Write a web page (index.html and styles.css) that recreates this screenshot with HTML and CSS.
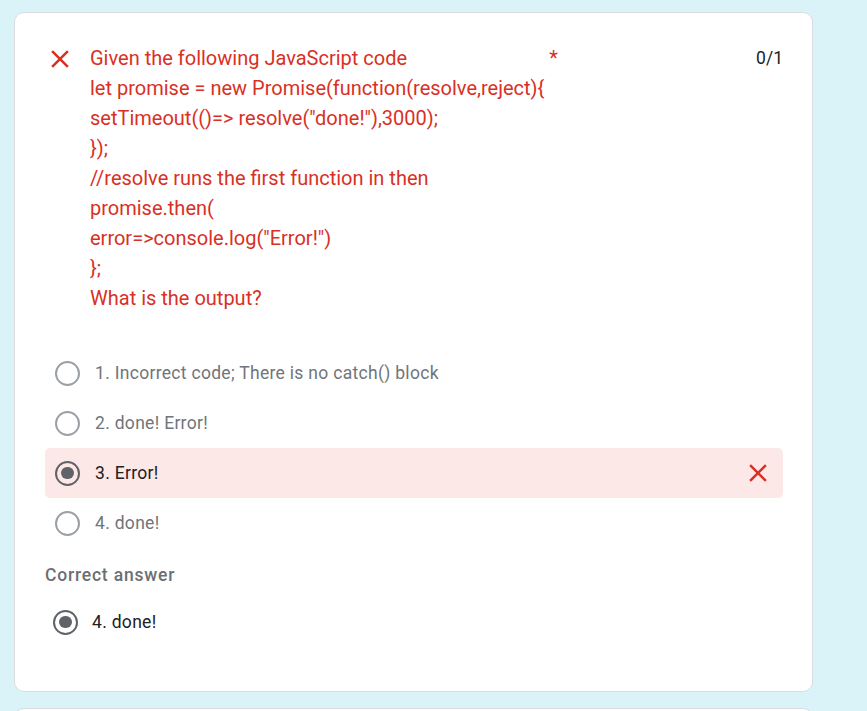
FILE: index.html
```html
<!DOCTYPE html>
<html lang="en">
<head>
<meta charset="utf-8">
<title>Quiz result</title>
<link rel="stylesheet" href="styles.css">
</head>
<body>
<div class="page">
  <div class="card">
    <div class="q-head">
      <svg class="x-icon" viewBox="0 0 24 24" width="30" height="30"><path d="M19 6.41L17.59 5 12 10.59 6.41 5 5 6.41 10.59 12 5 17.59 6.41 19 12 13.41 17.59 19 19 17.59 13.41 12z"/></svg>
      <div class="q-title">Given the following JavaScript code<br>let promise = new Promise(function(resolve,reject){<br>setTimeout(()=&gt; resolve("done!"),3000);<br>});<br>//resolve runs the first function in then<br>promise.then(<br>error=&gt;console.log("Error!")<br>};<br>What is the output?</div>
      <span class="req">*</span>
      <span class="score">0/1</span>
    </div>
    <div class="options">
      <div class="opt"><span class="radio"></span><span class="opt-text">1. Incorrect code; There is no catch() block</span></div>
      <div class="opt"><span class="radio"></span><span class="opt-text">2. done! Error!</span></div>
      <div class="opt wrong"><span class="radio on"></span><span class="opt-text sel">3. Error!</span>
        <svg class="x-icon end" viewBox="0 0 24 24" width="30" height="30"><path d="M19 6.41L17.59 5 12 10.59 6.41 5 5 6.41 10.59 12 5 17.59 6.41 19 12 13.41 17.59 19 19 17.59 13.41 12z"/></svg>
      </div>
      <div class="opt"><span class="radio"></span><span class="opt-text">4. done!</span></div>
    </div>
    <div class="correct-label">Correct answer</div>
    <div class="opt correct"><span class="radio on"></span><span class="opt-text sel">4. done!</span></div>
  </div>
  <div class="card next"></div>
</div>
</body>
</html>
```

FILE: styles.css
```css
html, body {
  margin: 0;
  padding: 0;
  background: #d9f3f9;
}
body {
  font-family: Roboto, "Liberation Sans", Arial, sans-serif;
  overflow: hidden;
  height: 711px;
}
.page {
  padding: 12px 0 0 14px;
  display: flex;
  flex-direction: column;
  gap: 16px;
  width: 799px;
}
.card {
  box-sizing: border-box;
  width: 799px;
  background: #fff;
  border: 1px solid #dadce0;
  border-radius: 10px;
  padding: 30px 29px 44px 30px;
}
.card.next {
  height: 120px;
}
.q-head {
  display: flex;
  align-items: flex-start;
}
.x-icon {
  flex: none;
  fill: #d93025;
  display: block;
}
.q-head .x-icon {
  margin-top: 1px;
}
.q-title {
  margin-left: 15px;
  color: #d93025;
  font-size: 20px;
  line-height: 30px;
  white-space: nowrap;
}
.req {
  color: #d93025;
  font-size: 20px;
  line-height: 30px;
  padding-left: 5px;
}
.score {
  margin-left: auto;
  color: #202124;
  font-size: 17.5px;
  line-height: 30px;
}
.options {
  margin-top: 35px;
}
.opt {
  display: flex;
  align-items: center;
  height: 50px;
  padding: 0 10px;
  border-radius: 5px;
}
.opt.wrong {
  background: #fce8e6;
}
.opt .end {
  margin-left: auto;
}
.radio {
  box-sizing: border-box;
  width: 25px;
  height: 25px;
  border: 2.5px solid #9aa0a6;
  border-radius: 50%;
  flex: none;
  display: flex;
  align-items: center;
  justify-content: center;
}
.radio.on {
  border-color: #5f6368;
}
.radio.on::after {
  content: "";
  width: 12.5px;
  height: 12.5px;
  border-radius: 50%;
  background: #5f6368;
}
.opt-text {
  margin-left: 15px;
  font-size: 17.5px;
  letter-spacing: 0.3px;
  color: #70757a;
}
.opt-text.sel {
  color: #202124;
}
.correct-label {
  margin-top: 15px;
  font-size: 17.5px;
  line-height: 25px;
  font-weight: 500;
  letter-spacing: 0.8px;
  color: #6b6f74;
}
.opt.correct {
  margin-top: 9px;
  padding-left: 8px;
}
.opt.correct .opt-text {
  margin-left: 14px;
}
```
